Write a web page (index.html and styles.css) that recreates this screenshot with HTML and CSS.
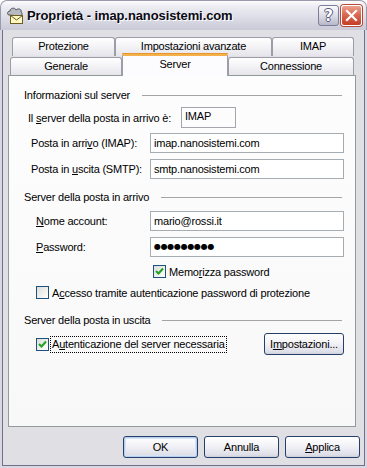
FILE: index.html
```html
<!DOCTYPE html>
<html>
    <head>
        <meta charset="utf-8">
        <title>Proprietà - imap.nanosistemi.com</title>
        <link rel="stylesheet" href="styles.css">
    </head>
    <body>
        <div class="window">
            <div class="titlebar">
                <svg class="app-icon" width="18" height="18" viewBox="0 0 18 18">
                    <path d="M3 8 C1 8 1 4 4 4 C4 1 9 0 10 3 C12 1 16 2 15 5 C17 6 16 9 14 9 Z" fill="#b9bac2" stroke="#4d4f5a" stroke-width="1"/>
                    <rect x="4.5" y="8.5" width="12" height="8" fill="#fff8c4" stroke="#6d5d1e"/>
                    <polyline points="4.5,8.5 10.5,13 16.5,8.5" fill="none" stroke="#6d5d1e"/>
                </svg>
                <span class="title">Proprietà - imap.nanosistemi.com</span>
                <div class="caption">
                    <span class="cap-btn help">?</span>
                    <span class="cap-btn close">
                        <svg width="13" height="13" viewBox="0 0 13 13">
                            <path d="M2 2 L11 11 M11 2 L2 11" stroke="#fff" stroke-width="2.2" stroke-linecap="square"/>
                        </svg>
                    </span>
                </div>
            </div>
            <div class="frame">
                <div class="client">
                    <div class="tabrow back">
                        <div class="tab w-prot">Protezione</div>
                        <div class="tab w-adv">Impostazioni avanzate</div>
                        <div class="tab w-imap">IMAP</div>
                    </div>
                    <div class="tabrow front">
                        <div class="tab w-gen">Generale</div>
                        <div class="tab w-srv active">Server</div>
                        <div class="tab w-conn">Connessione</div>
                    </div>

                    <div class="panel">
                        <div class="section-title first">Informazioni sul server</div>

                        <div class="row imap-row">
                            <span class="lbl lbl-imap">Il <u>s</u>erver della posta in arrivo è:</span>
                            <span class="ro-box">IMAP</span>
                        </div>
                        <div class="row field-row r-in">
                            <span class="lbl lbl-g1">Posta in arri<u>v</u>o (IMAP):</span>
                            <span class="input">imap.nanosistemi.com</span>
                        </div>
                        <div class="row field-row r-out">
                            <span class="lbl lbl-g1">Posta in <u>u</u>scita (SMTP):</span>
                            <span class="input">smtp.nanosistemi.com</span>
                        </div>

                        <div class="section-title second">Server della posta in arrivo</div>

                        <div class="row field-row g2 r-user">
                            <span class="lbl lbl-g2"><u>N</u>ome account:</span>
                            <span class="input">mario@rossi.it</span>
                        </div>
                        <div class="row field-row g2 r-pass">
                            <span class="lbl lbl-g2"><u>P</u>assword:</span>
                            <span class="input dots">●●●●●●●●●</span>
                        </div>
                        <div class="row check-row r-remember">
                            <span class="checkbox checked">
                                <svg width="11" height="11" viewBox="0 0 11 11"><path d="M2 5 L4.5 7.5 L9 2.5" fill="none" stroke="#21a121" stroke-width="2"/></svg>
                            </span>
                            <span>Memo<u>r</u>izza password</span>
                        </div>
                        <div class="row check-row r-spa">
                            <span class="checkbox"></span>
                            <span>A<u>c</u>cesso tramite autenticazione password di protezione</span>
                        </div>

                        <div class="section-title third">Server della posta in uscita</div>

                        <div class="row check-row r-auth">
                            <span class="checkbox checked">
                                <svg width="11" height="11" viewBox="0 0 11 11"><path d="M2 5 L4.5 7.5 L9 2.5" fill="none" stroke="#21a121" stroke-width="2"/></svg>
                            </span>
                            <span class="focus">A<u>u</u>tenticazione del server necessaria</span>
                            <button class="btn btn-settings">I<u>m</u>postazioni...</button>
                        </div>
                    </div>

                    <div class="actions">
                        <button class="btn default">OK</button>
                        <button class="btn">Annulla</button>
                        <button class="btn"><u>A</u>pplica</button>
                    </div>
                </div>
            </div>
        </div>
    </body>
</html>
```

FILE: styles.css
```css
body {
    margin: 0;
    background: #fff;
    font-family: "Liberation Sans", Arial, sans-serif;
    font-size: 11px;
    letter-spacing: -0.2px;
    color: #000;
}

u {
    text-decoration: underline;
    text-underline-offset: 1px;
}

.window {
    width: 367px;
    height: 468px;
    display: flex;
    flex-direction: column;
}

/* title bar */
.titlebar {
    height: 30px;
    box-sizing: border-box;
    display: flex;
    align-items: center;
    padding: 0 5px 0 5px;
    border: 1px solid #9a9aad;
    border-bottom: none;
    border-radius: 7px 7px 0 0;
    background: linear-gradient(#fdfdfe 0%, #ececf2 20%, #dcdce6 60%, #c9c9d8 100%);
}

.app-icon {
    margin-top: 1px;
}

.title {
    margin-left: 3px;
    font-weight: bold;
    font-size: 13px;
    letter-spacing: -0.1px;
    color: #0a0a14;
    text-shadow: 1px 1px 0 #fff;
}

.caption {
    margin-left: auto;
    display: flex;
    gap: 2px;
    margin-right: -1px;
}

.cap-btn {
    width: 21px;
    height: 21px;
    box-sizing: border-box;
    border-radius: 3px;
    display: flex;
    align-items: center;
    justify-content: center;
}

.help {
    border: 1px solid #7d7d99;
    background: linear-gradient(#fbfbfd, #d6d6e2 60%, #b7b7c9);
    color: #fff;
    font-weight: bold;
    font-size: 15px;
    font-family: "DejaVu Sans", sans-serif;
    text-shadow: -1px 0 #55557a, 1px 0 #55557a, 0 -1px #55557a, 0 1px #55557a;
}

.close {
    border: 1px solid #fff;
    box-shadow: 0 0 0 1px #b44b36;
    background: linear-gradient(#eba18f, #d96a52 45%, #c43d27);
}

/* frame */
.frame {
    flex: 1;
    display: flex;
    padding: 0 2px 2px 2px;
    background: #d8d8e2;
}

.client {
    flex: 1;
    background: #e0dfe3;
    border: 1px solid #6f6f8e;
    border-top: none;
    padding-top: 7px;
}

/* tabs */
.tabrow {
    display: flex;
    height: 19px;
}

.tabrow.back {
    margin-left: 9px;
}

.tabrow.front {
    margin-left: 7px;
    margin-top: 1px;
    height: 18px;
}

.tab {
    box-sizing: border-box;
    height: 19px;
    border: 1px solid #9d9da9;
    border-bottom: none;
    border-radius: 3px 3px 0 0;
    background: linear-gradient(#ffffff, #f3f3f6 50%, #e4e4ea);
    text-align: center;
    line-height: 17px;
}

.front .tab {
    height: 18px;
}

.w-prot { width: 103px; }
.w-adv { width: 157px; }
.w-imap { width: 82px; }
.w-gen { width: 112px; }
.w-srv { width: 106px; }
.w-conn { width: 126px; }

.tab.active {
    position: relative;
    z-index: 1;
    height: 23px;
    margin-top: -4px;
    border-top: 3px solid #f4b04a;
    background: #fcfcfe;
    line-height: 17px;
}

.tab.active::before {
    content: "";
    position: absolute;
    left: -1px;
    right: -1px;
    top: -3px;
    height: 1px;
    background: #e6962a;
    border-radius: 3px 3px 0 0;
}

/* panel */
.panel {
    margin-left: 5px;
    width: 348px;
    height: 352px;
    box-sizing: border-box;
    border: 1px solid #919b9c;
    background: linear-gradient(#fdfdfe, #f8f8f9);
    padding: 0 11px 0 15px;
}

.section-title {
    display: flex;
    align-items: center;
    height: 14px;
    gap: 12px;
}

.section-title::after {
    content: "";
    flex: 1;
    border-top: 1px solid #a3a3a8;
    margin-right: 2px;
}

.section-title.first { margin-top: 12px; }
.section-title.second { margin-top: 11px; }
.section-title.third { margin-top: 14px; }

.row {
    display: flex;
    align-items: center;
}

.imap-row {
    margin-top: 5px;
    padding-left: 4px;
    height: 21px;
}

.lbl-imap { width: 153px; }

.ro-box {
    width: 55px;
    height: 21px;
    box-sizing: border-box;
    border: 1px solid #a5a5ad;
    padding: 2px 3px;
    line-height: 13px;
}

.field-row {
    padding-left: 7px;
    height: 20px;
}

.field-row.g2 {
    padding-left: 12px;
}

.lbl-g1 { width: 119px; }
.lbl-g2 { width: 114px; }

.r-in { margin-top: 5px; }
.r-out { margin-top: 6px; }
.r-user { margin-top: 7px; }
.r-pass { margin-top: 6px; }

.input {
    flex: 1;
    height: 20px;
    box-sizing: border-box;
    border: 1px solid #a5acb2;
    background: #fff;
    padding-left: 3px;
    line-height: 18px;
}

.input.dots {
    font-family: "DejaVu Sans", sans-serif;
    font-size: 8px;
    letter-spacing: -0.3px;
}

.check-row {
    gap: 3px;
    height: 13px;
}

.r-remember {
    margin-top: 8px;
    padding-left: 129px;
}

.r-spa {
    margin-top: 8px;
    padding-left: 12px;
}

.r-auth {
    margin-top: 6px;
    padding-left: 12px;
    height: 22px;
    gap: 2px;
}

.checkbox {
    width: 13px;
    height: 13px;
    box-sizing: border-box;
    border: 1px solid #1c5180;
    background: linear-gradient(135deg, #dcdcd7, #ffffff);
    display: flex;
    align-items: center;
    justify-content: center;
}

.focus {
    outline: 1px dotted #000;
    padding: 1px;
    line-height: 13px;
}

/* buttons */
.btn {
    font-family: "Liberation Sans", Arial, sans-serif;
    font-size: 11px;
    letter-spacing: -0.2px;
    color: #000;
    width: 75px;
    height: 22px;
    box-sizing: border-box;
    padding: 0;
    border: 1px solid #24406a;
    border-radius: 3px;
    background: linear-gradient(#ffffff, #f4f4f8 40%, #dedee8 90%, #cfcfdc);
}

.btn.default {
    box-shadow: inset 0 0 0 1px #b8cff0, inset 0 0 0 2px #d6e3f6;
}

.btn-settings {
    margin-left: auto;
    width: 80px;
}

.actions {
    display: flex;
    justify-content: flex-end;
    gap: 6px;
    margin-top: 9px;
    padding-right: 4px;
}
```
